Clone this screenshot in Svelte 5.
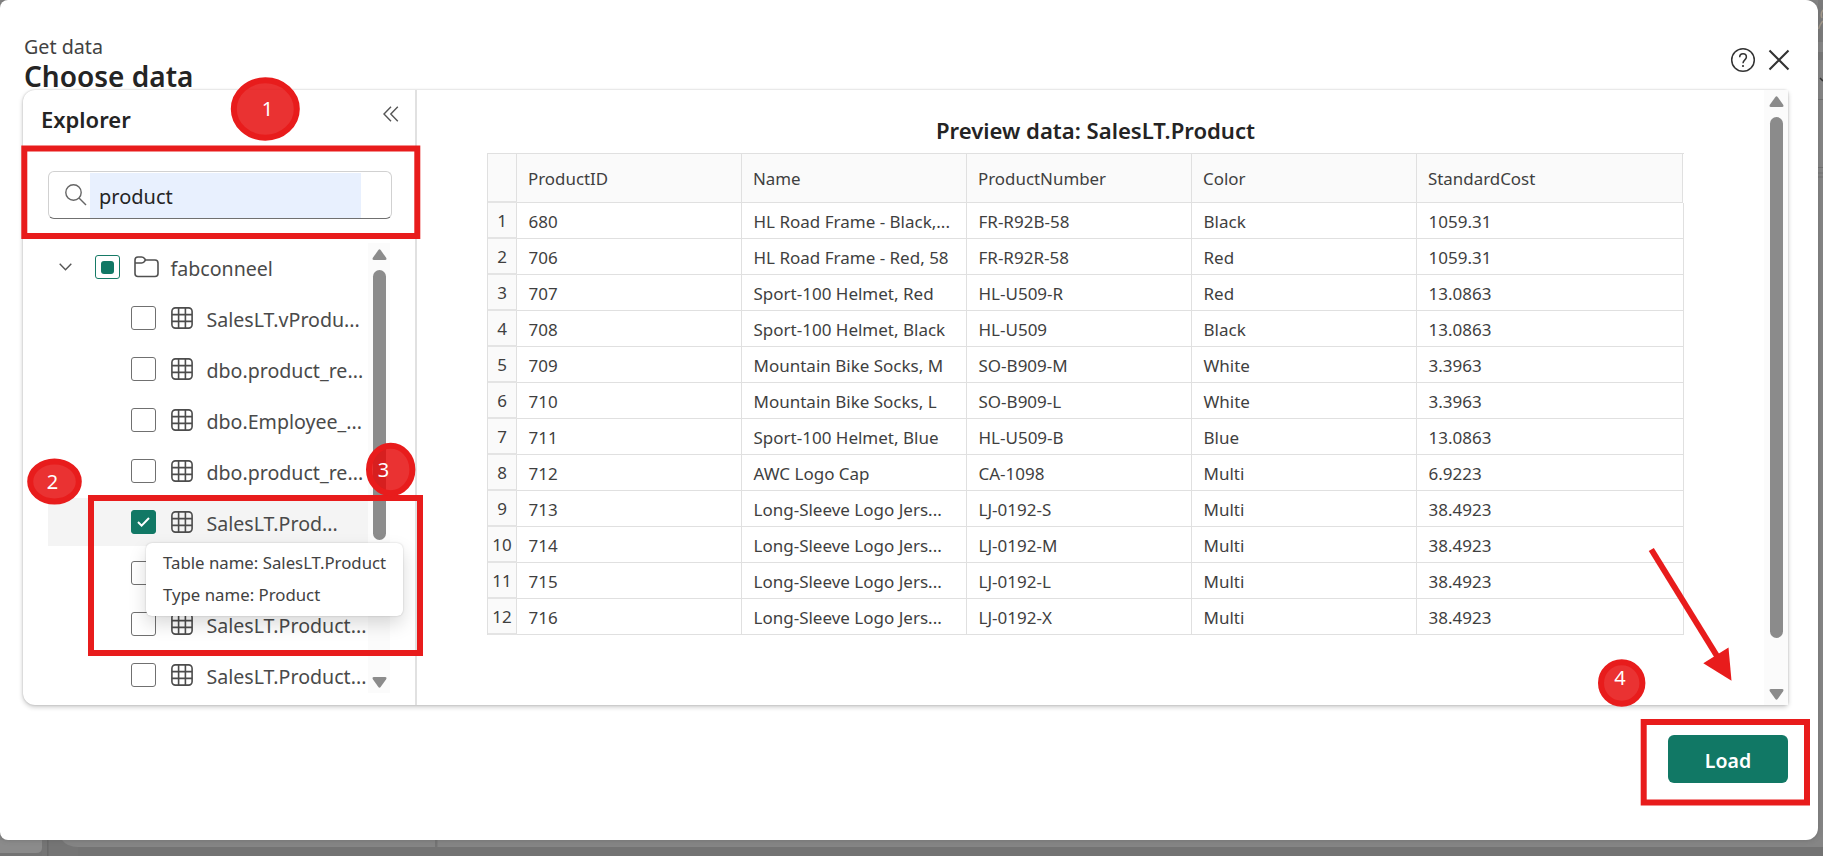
<script>
  const columns = ['ProductID', 'Name', 'ProductNumber', 'Color', 'StandardCost'];
  const rows = [
    ['680', 'HL Road Frame - Black,...', 'FR-R92B-58', 'Black', '1059.31'],
    ['706', 'HL Road Frame - Red, 58', 'FR-R92R-58', 'Red', '1059.31'],
    ['707', 'Sport-100 Helmet, Red', 'HL-U509-R', 'Red', '13.0863'],
    ['708', 'Sport-100 Helmet, Black', 'HL-U509', 'Black', '13.0863'],
    ['709', 'Mountain Bike Socks, M', 'SO-B909-M', 'White', '3.3963'],
    ['710', 'Mountain Bike Socks, L', 'SO-B909-L', 'White', '3.3963'],
    ['711', 'Sport-100 Helmet, Blue', 'HL-U509-B', 'Blue', '13.0863'],
    ['712', 'AWC Logo Cap', 'CA-1098', 'Multi', '6.9223'],
    ['713', 'Long-Sleeve Logo Jers...', 'LJ-0192-S', 'Multi', '38.4923'],
    ['714', 'Long-Sleeve Logo Jers...', 'LJ-0192-M', 'Multi', '38.4923'],
    ['715', 'Long-Sleeve Logo Jers...', 'LJ-0192-L', 'Multi', '38.4923'],
    ['716', 'Long-Sleeve Logo Jers...', 'LJ-0192-X', 'Multi', '38.4923']
  ];
  const tables = [
    { label: 'SalesLT.vProdu...' },
    { label: 'dbo.product_re...' },
    { label: 'dbo.Employee_...' },
    { label: 'dbo.product_re...' },
    { label: 'SalesLT.Prod...', checked: true },
    { label: '' },
    { label: 'SalesLT.Product...' },
    { label: 'SalesLT.Product...' }
  ];
</script>

{#snippet arrow(down)}
  <svg class="arrow" class:down width="15" height="12" viewBox="0 0 15 12">
    <path d="M6.2 1.2Q7.5-.5 8.8 1.2L14 8.6Q15.4 11 13 11H2Q-.4 11 1 8.6Z" fill="#8b8b8b" />
  </svg>
{/snippet}

<div class="backdrop">
  <div class="dialog">
    <header>
      <div>
        <div class="crumb">Get data</div>
        <h1>Choose data</h1>
      </div>
      <div class="actions">
        <svg width="26" height="26" viewBox="0 0 26 26" fill="none" stroke="#333">
          <circle cx="13" cy="13" r="11.3" stroke-width="1.5" />
          <path d="M9.7 10.2c0-4.6 6.7-4.4 6.7-.2 0 2.7-3.4 3.1-3.4 6.2" stroke-width="1.5" />
          <circle cx="13" cy="19" r="1.1" fill="#333" stroke="none" />
        </svg>
        <svg width="22" height="22" viewBox="0 0 22 22" stroke="#333" stroke-width="2.1">
          <path d="M1.5 1.5l19 19M20.500 1.500l-19 19" />
        </svg>
      </div>
    </header>

    <main>
      <aside>
        <div class="side-head">
          <h2>Explorer</h2>
          <svg width="16" height="16" viewBox="0 0 16 16" fill="none" stroke="#555" stroke-width="1.4">
            <path d="M8 .8L1 8l7 7.200M14.800.8L7.800 8l7 7.200" />
          </svg>
        </div>
        <div class="search">
          <svg width="22" height="22" viewBox="0 0 22 22" fill="none" stroke="#666" stroke-width="1.4">
            <circle cx="8.500" cy="8.500" r="7.700" /><path d="M14 14l7 7" />
          </svg>
          <span>product</span>
        </div>
        <div class="tree-wrap">
          <div class="tree">
            <div class="node root">
              <svg class="chev" width="13" height="8" viewBox="0 0 13 8" fill="none" stroke="#555" stroke-width="1.4">
                <path d="M.7.8l5.800 6 5.800-6" />
              </svg>
              <i class="box mixed"></i>
              <svg class="folder" width="25" height="22" viewBox="0 0 25 22" fill="none" stroke="#505050" stroke-width="1.6">
                <path d="M1 7V4q0-3 3-3h3.500q1.800 0 3 1.500L11.500 4H21q3 0 3 3v10.500q0 3-3 3H4q-3 0-3-3V7h6.500q1.700 0 2.700-1.200L11.500 4" />
              </svg>
              <span>fabconneel</span>
            </div>
            {#each tables as table}
              <div class="node" class:selected={table.checked}>
                <i class="box" class:on={table.checked}>
                  {#if table.checked}
                    <svg width="13" height="10" viewBox="0 0 13 10" fill="none" stroke="#fff" stroke-width="2"><path d="M1 5l3.600 3.600L12 1" /></svg>
                  {/if}
                </i>
                <svg class="grid" width="22" height="22" viewBox="0 0 22 22" fill="none" stroke="#4c4c4c" stroke-width="1.6">
                  <rect x=".9" y=".9" width="20.200" height="20.200" rx="3.500" />
                  <path d="M7.600 1v20M14.400 1v20M1 7.600h20M1 14.400h20" />
                </svg>
                <span>{table.label}</span>
              </div>
            {/each}
          </div>
          <div class="scroll side-scroll">{@render arrow(false)}<div class="thumb"></div>{@render arrow(true)}</div>
        </div>
      </aside>

      <section>
        <div class="preview">
          <h3>Preview data: SalesLT.Product</h3>
          <div class="table">
            <div class="tr th">
              <div class="num"></div>
              {#each columns as column}<div><span>{column}</span></div>{/each}
            </div>
            {#each rows as row, i}
              <div class="tr">
                <div class="num">{i + 1}</div>
                {#each row as cell}<div><span>{cell}</span></div>{/each}
              </div>
            {/each}
          </div>
        </div>
        <div class="scroll main-scroll">{@render arrow(false)}<div class="thumb"></div>{@render arrow(true)}</div>
      </section>
    </main>

    <footer><button>Load</button></footer>
  </div>

  <svg class="page-edges" width="1823" height="856">
    <path d="M42 840H62Q67 847 78 847V856H42Z" fill="#757575" />
    <path d="M0 840H42V848Q42 853 36 853H0Z" fill="#8b8b8b" />
    <path d="M47 840h1.500v16H47z" fill="#696969" />
    <path d="M435 840h2.500v7H435z" fill="#747474" />
    <path d="M1818 0h5v42h-5z" fill="#7b7b7b" />
    <path d="M1823 10q-3 4-1 8M1818.500 29q2-6 4.500-8" fill="none" stroke="#a49a8b" stroke-width="1.500" />
    <path d="M1818 60h5v-8h-5z" fill="#777" />
    <path d="M1820 78l3 3" stroke="#333" stroke-width="1.500" />
    <path d="M1818 99.500h5M1818 167.500h5" stroke="#707070" />
    <path d="M1818 173h5M1818 177h5" stroke="#7b7b7b" stroke-width="2" />
  </svg>

  <div class="tooltip"><p>Table name: SalesLT.Product</p><p>Type name: Product</p></div>

  <svg class="marks" width="1823" height="856" fill="none">
    <g stroke="#e81c1c" stroke-width="6">
      <rect x="24.300" y="148.500" width="393" height="87.500" />
      <rect x="91" y="498" width="329" height="155" />
      <rect x="1643.700" y="722" width="163.300" height="80.500" />
      <g fill="#e60b0b" fill-opacity=".84">
        <ellipse cx="265.300" cy="109" rx="31.500" ry="28.700" />
        <ellipse cx="54.500" cy="481.500" rx="24.300" ry="20" />
        <ellipse cx="390.700" cy="469.500" rx="21.700" ry="23.700" />
        <circle cx="1621.700" cy="683" r="20.700" />
      </g>
      <path d="M1651.300 549.500l66 107" />
    </g>
    <path d="M1703.300 663.300L1728.500 647.500 1731.500 680.700Z" fill="#e81c1c" />
    <g class="digits">
      <text x="267.500" y="115.500">1</text>
      <text x="52.500" y="488.500">2</text>
      <text x="383.500" y="476.500">3</text>
      <text x="1620" y="684.500">4</text>
    </g>
  </svg>
</div>

<style>
  :global(body) { margin: 0; overflow: hidden; }
  * { box-sizing: border-box; }
  h1, h2, h3, p { margin: 0; }
  svg { display: block; flex: none; }
  .backdrop {
    position: relative; width: 1823px; height: 856px; overflow: hidden;
    background: linear-gradient(#858585 0 847px, #737373 847px);
    font-family: "Noto Sans", "Open Sans", sans-serif; color: #424242;
  }
  .dialog {
    position: relative; z-index: 1; display: flex; flex-direction: column;
    width: 1818px; height: 840px; padding: 0 30px 0 23px; background: #fff; border-radius: 8px 12px 12px 8px;
    box-shadow: 0 0 5px #5557;
  }
  header { display: flex; justify-content: space-between; height: 89.500px; flex: none; }
  .crumb { margin-top: 33px; padding-left: 1px; font-size: 19.700px; line-height: 27px; }
  h1 { padding-left: 1px; font-size: 28px; line-height: 33px; font-weight: 600; color: #242424; white-space: nowrap; }
  .actions { display: flex; align-items: center; gap: 12px; height: 26px; margin: 47px -2px 0 0; }
  main {
    display: flex; height: 615.500px; flex: none; border-radius: 12px 4px 4px 12px; background: #fff;
    box-shadow: 0 0 2px #0003, 0 2px 5px #00000038;
  }
  aside { width: 394px; border-right: 2px solid #e1e1e1; flex: none; }
  .side-head { display: flex; justify-content: space-between; align-items: center; height: 56.500px; padding: 1px 16px 0 18px; }
  .side-head svg { margin-top: -8px; }
  h2 { padding-top: 2px; font-size: 22px; line-height: 28px; font-weight: 600; color: #242424; }
  .search {
    display: flex; align-items: center; width: 344px; height: 48px; margin: 25px 0 0 25px; padding: 1px 30px 1px 16px;
    border: 1px solid #d1d1d1; border-bottom: 1.500px solid #707070; border-radius: 6px;
  }
  .search svg { margin-right: 3px; }
  .search span { flex: 1; height: 45px; padding-left: 9px; background: #e8f0fe; color: #242424; font-size: 20px; line-height: 47px; }
  .tree-wrap { display: flex; width: 346px; height: 450px; margin: 24px 0 0 25px; }
  .tree { width: 322px; margin-right: -2px; }
  .node { display: flex; align-items: center; height: 48px; margin-bottom: 3px; padding-left: 83px; font-size: 19.600px; white-space: nowrap; color: #4a4a4a; }
  .node.root { padding-left: 11px; }
  .node.selected { background: #f4f4f4; }
  .node span { padding-top: 2px; }
  .grid { margin: 0 14px 0 15px; }
  .chev { margin-right: 23px; }
  .folder { margin: 0 12px 0 14px; }
  .box { display: flex; align-items: center; justify-content: center; width: 24.500px; height: 24.500px; flex: none; border: 1.500px solid #707070; border-radius: 3px; background: #fff; }
  .box.mixed { border-color: #167a66; }
  .box.mixed::after { content: ""; width: 13px; height: 13px; border-radius: 3px; background: #117865; }
  .box.on { border-color: #117865; background: #117865; }
  .scroll { display: flex; flex-direction: column; align-items: center; background: #fbfbfb; flex: none; }
  .arrow.down { transform: rotate(180deg); margin-top: auto; }
  .thumb { width: 13px; border-radius: 7px; background: #8b8b8b; }
  .side-scroll { width: 22px; padding: 6px 0 5px; }
  .side-scroll .thumb { height: 270px; margin-top: 9px; }
  section { display: flex; flex: 1; justify-content: space-between; min-width: 0; }
  .preview { padding: 27.500px 0 0 70px; }
  h3 { width: 1217px; margin-top: -1px; font-size: 22.100px; line-height: 28px; font-weight: 600; text-align: center; color: #242424; }
  .table { width: 1197px; margin-top: 9px; border-left: 1px solid #e0e0e0; font-size: 17px; color: #3f3f3f; }
  .tr { display: grid; grid-template-columns: 29px repeat(4, 225px) 267px; height: 36px; }
  .tr > div { display: flex; align-items: center; padding: 1px 0 0 11.500px; border: solid #e0e0e0; border-width: 0 1px 1px 0; white-space: nowrap; }
  .tr > div.num { justify-content: center; padding-left: 0; background: #fafafa; border-bottom-width: 2px; border-bottom-color: #e4e4e4; }
  .th { height: 50px; grid-template-columns: 29px repeat(4, 225px) 266px; border-top: 1px solid #e0e0e0; font-size: 16.900px; }
  .tr.th > div { background: #fafafa; padding-top: 0; padding-left: 11px; }
  .main-scroll { width: 24px; padding: 6px 0 5px; }
  .main-scroll .thumb { height: 521px; margin-top: 9px; }
  footer { display: flex; justify-content: flex-end; padding-top: 30px; }
  button { width: 120px; height: 48px; border: 0; border-radius: 6px; background: #117865; color: #fff; font: 600 19.500px "Noto Sans", sans-serif; padding: 2px 0 0; }
  .page-edges { position: absolute; inset: 0; }
  .tooltip {
    position: absolute; z-index: 2; left: 146px; top: 543px; width: 257px; height: 73px; padding: 4px 0 0 17px;
    border-radius: 6px; background: #fff; box-shadow: 0 0 2px #0003, 0 8px 18px #00000026; font-size: 16.800px; line-height: 32px; white-space: nowrap;
  }
  .marks { position: absolute; z-index: 3; inset: 0; pointer-events: none; }
  .digits { fill: #fff; font-size: 20px; text-anchor: middle; }
</style>
